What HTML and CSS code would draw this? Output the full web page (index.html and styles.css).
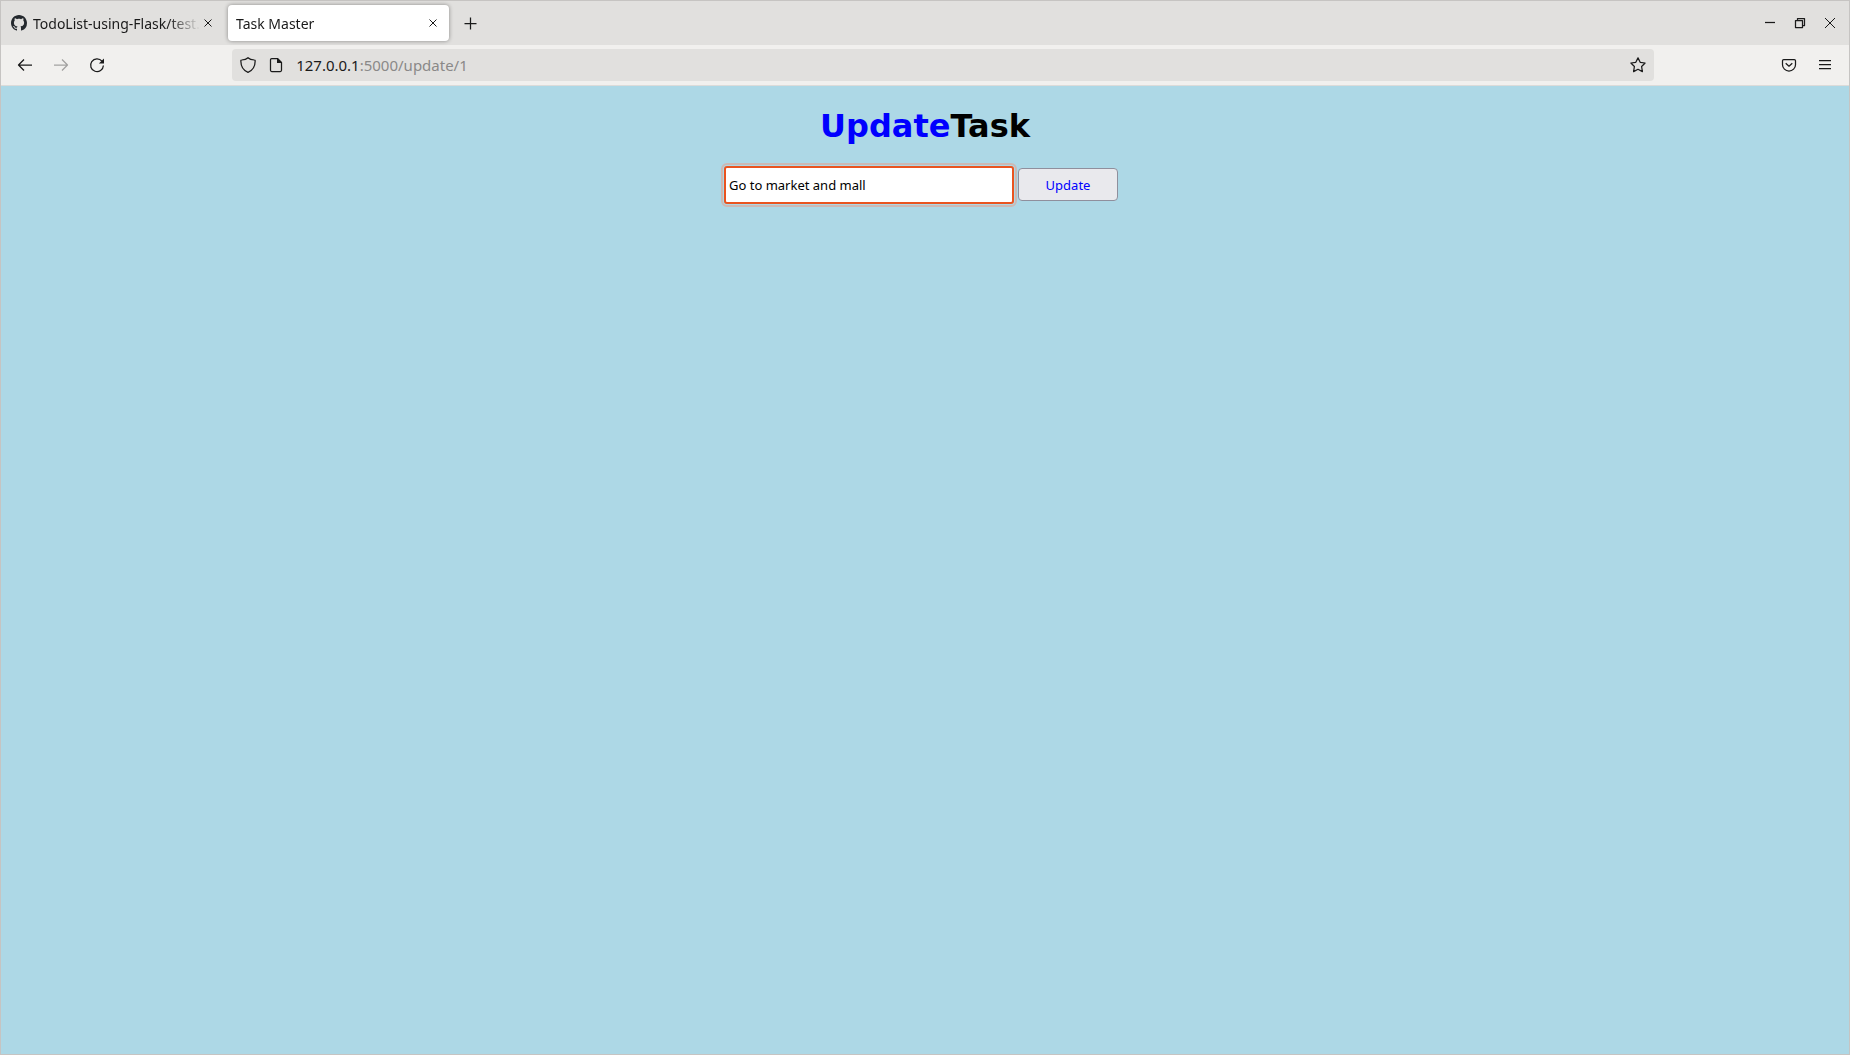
FILE: index.html
```html
<!DOCTYPE html>
<html lang="en">
<head>
<meta charset="utf-8">
<title>Task Master</title>
<link rel="stylesheet" href="styles.css">
</head>
<body>
<div class="window">
  <header>
    <div class="tab-strip">
      <div class="tab">
        <svg class="icon favicon" viewBox="0 0 16 16"><path d="M8 0C3.58 0 0 3.58 0 8c0 3.54 2.29 6.53 5.47 7.59.4.07.55-.17.55-.38 0-.19-.01-.82-.01-1.49-2.01.37-2.53-.49-2.69-.94-.09-.23-.48-.94-.82-1.13-.28-.15-.68-.52-.01-.53.63-.01 1.08.58 1.23.82.72 1.21 1.87.87 2.33.66.07-.52.28-.87.51-1.07-1.78-.2-3.64-.89-3.64-3.95 0-.87.31-1.59.82-2.15-.08-.2-.36-1.02.08-2.12 0 0 .67-.21 2.2.82.64-.18 1.32-.27 2-.27s1.36.09 2 .27c1.53-1.04 2.2-.82 2.2-.82.44 1.1.16 1.92.08 2.12.51.56.82 1.27.82 2.15 0 3.07-1.87 3.75-3.65 3.95.29.25.54.73.54 1.48 0 1.07-.01 1.93-.01 2.2 0 .21.15.46.55.38A8.01 8.01 0 0 0 16 8c0-4.42-3.58-8-8-8z"/></svg>
        <span class="tab-title">TodoList-using-Flask/test.</span>
        <button class="tab-close" aria-label="Close tab"><svg viewBox="0 0 8 8"><path d="M.5.5l7 7M7.5.5l-7 7"/></svg></button>
      </div>
      <div class="tab tab-active">
        <span class="tab-title">Task Master</span>
        <button class="tab-close" aria-label="Close tab"><svg viewBox="0 0 8 8"><path d="M.5.5l7 7M7.5.5l-7 7"/></svg></button>
      </div>
      <button class="new-tab" aria-label="New tab"><svg class="icon" viewBox="0 0 16 16"><path d="M8.500 2.500v12M2.500 8.500h12"/></svg></button>
      <div class="window-controls">
        <button aria-label="Minimize"><svg class="icon" viewBox="0 0 16 16"><path d="M3 7.500h10"/></svg></button>
        <button aria-label="Restore"><svg class="icon" viewBox="0 0 16 16"><path d="M3.500 5.500h7v7h-7zM5.500 5.500v-2h7v7h-2"/></svg></button>
        <button aria-label="Close"><svg class="icon" viewBox="0 0 16 16"><path class="thin" d="M3 3l10 10M13 3L3 13"/></svg></button>
      </div>
    </div>
    <div class="toolbar">
      <button class="tool" aria-label="Back"><svg class="icon" viewBox="0 0 16 16"><path d="M7 2.500L1.500 8 7 13.500M1.500 8H15"/></svg></button>
      <button class="tool" aria-label="Forward" disabled><svg class="icon" viewBox="0 0 16 16"><path d="M9 2.500L14.500 8 9 13.500M14.500 8H1"/></svg></button>
      <button class="tool" aria-label="Reload"><svg class="icon" viewBox="0 0 16 16"><path d="M13 4.200A6.400 6.400 0 1 0 14.400 8.500"/><path class="solid" d="M15 1.500v5.100H9.900z"/></svg></button>
      <div class="spacer"></div>
      <div class="url-bar">
        <svg class="icon" viewBox="0 0 16 16"><path d="M8 .7C6.600 2 3.800 2.800 1.600 3c-.5 0-.8.300-.8.800C.9 9.500 3 13.500 8 15.300c5-1.800 7.100-5.800 7.200-11.500 0-.5-.3-.8-.8-.8C12.200 2.800 9.400 2 8 .7z"/></svg>
        <svg class="icon" viewBox="0 0 16 16"><path d="M9.500 1.500H3.700c-.7 0-1.200.5-1.200 1.200v10.600c0 .7.500 1.200 1.200 1.200h8.600c.7 0 1.200-.5 1.200-1.200V5.500z"/><path class="solid" d="M9 1.500h.8L13.500 5.200V6H9z"/></svg>
        <span class="url"><b>127.0.0.1</b>:5000/update/1</span>
        <svg class="icon" viewBox="0 0 16 16"><path d="M8 .9l2.200 4.400 4.900.7-3.500 3.500.8 5.100L8 12.300l-4.400 2.300.8-5.100L.9 6l4.900-.7z"/></svg>
      </div>
      <div class="spacer"></div>
      <button class="tool" aria-label="Save to Pocket"><svg class="icon" viewBox="0 0 16 16"><path d="M2.700 2.500h10.600c.7 0 1.200.5 1.200 1.200v4A6.500 6.300 0 0 1 1.500 7.700v-4c0-.7.500-1.200 1.200-1.200z"/><path d="M4.700 6.200L8 9.200l3.300-3"/></svg></button>
      <button class="tool" aria-label="Menu"><svg class="icon" viewBox="0 0 16 16"><path d="M2 3.500h12M2 7.500h12M2 11.500h12"/></svg></button>
    </div>
  </header>
  <main>
    <h1><span class="accent">Update</span>Task</h1>
    <form>
      <input class="task" type="text" aria-label="Task" value="Go to market and mall">
      <button class="update" type="button">Update</button>
    </form>
  </main>
</div>
</body>
</html>
```
FILE: styles.css
```css
* { box-sizing: border-box; }

body {
  margin: 0;
  font-family: "Noto Sans", "Open Sans", sans-serif;
  font-size: 14px;
  color: #1a1a1a;
}

button {
  display: flex;
  align-items: center;
  justify-content: center;
  padding: 0;
  border: 0;
  background: none;
  color: inherit;
  font: inherit;
}

svg {
  flex: none;
  fill: none;
  stroke: currentColor;
  stroke-width: 1.25;
  stroke-linejoin: round;
}

.icon { width: 16px; height: 16px; }
.solid { fill: currentColor; stroke: none; }
.thin { stroke-width: 1; }

.favicon {
  margin-right: 6px;
  fill: #24292e;
  stroke: none;
}

.window {
  display: flex;
  flex-direction: column;
  min-height: 100vh;
  border: 1px solid #c6c4c2;
}

.tab-strip {
  display: flex;
  align-items: center;
  height: 44px;
  padding-right: 11px;
  background: #e1e0de;
}

.tab {
  display: flex;
  align-items: center;
  width: 221px;
  height: 36px;
  margin-right: 6px;
  padding: 0 6px 0 10px;
  border-radius: 4px;
}

.tab-active {
  padding: 0 8px;
  background: #fff;
  box-shadow: 0 0 4px rgba(0, 0, 0, 0.4);
}

.tab-title {
  flex: 1;
  white-space: nowrap;
  mask-image: linear-gradient(to left, transparent, #000 32px);
}

.tab-close { width: 16px; height: 24px; }
.tab-close svg { width: 8px; height: 8px; stroke-width: 1; }

.new-tab { width: 30px; height: 36px; }

.window-controls {
  display: flex;
  gap: 14px;
  margin-left: auto;
}

.window-controls button { width: 16px; height: 24px; }

.toolbar {
  display: flex;
  align-items: center;
  height: 41px;
  padding: 0 6px;
  border-bottom: 1px solid #dcdbd9;
  background: #f1f0ee;
}

.tool { width: 36px; height: 32px; }
.tool:disabled { color: #a3a2a1; }

.spacer { flex: 1 1 0; }

.url-bar {
  display: flex;
  flex: 12 1 0;
  align-items: center;
  gap: 12px;
  height: 32px;
  padding: 0 8px;
  border-radius: 4px;
  background: #e1e0de;
}

.url {
  flex: 1;
  font-size: 15px;
  color: #8a8988;
}

.url b { font-weight: 400; color: #1a1a1a; }

main {
  flex: 1;
  padding: 21px 8px;
  background: #add8e6;
}

h1 {
  margin: 0 0 21px;
  font: bold 32px/38px "DejaVu Sans", sans-serif;
  text-align: center;
  color: #000;
}

.accent { color: #00f; }

form {
  display: flex;
  align-items: center;
  justify-content: center;
  gap: 4px;
  padding-right: 8px;
}

.task {
  width: 290px;
  height: 38px;
  padding: 0 3px;
  border: 2px solid #e95420;
  border-radius: 3px;
  outline: 2px solid #ccb9b5;
  outline-offset: 1px;
  background: #fff;
  color: #000;
  font: inherit;
  font-size: 13px;
}

.update {
  width: 100px;
  height: 33px;
  margin-bottom: 1px;
  border: 1px solid #8f8f9d;
  border-radius: 4px;
  background: #e9e9ed;
  color: #00f;
  font-size: 13px;
}
```
